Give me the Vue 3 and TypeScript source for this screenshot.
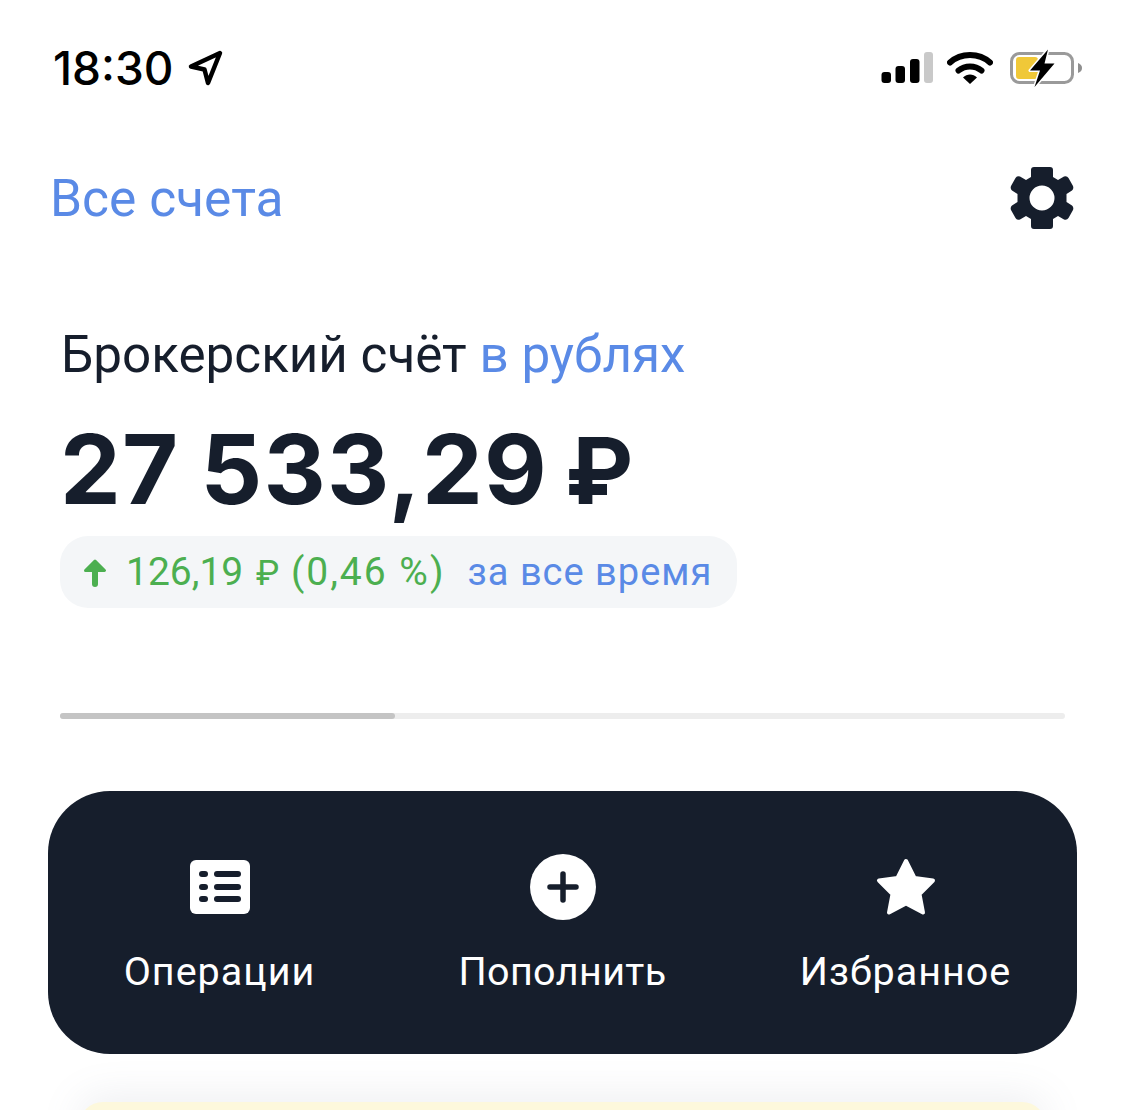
<template>
  <div class="screen">
    <div class="status">
      <div class="time">
        <span>18:30</span>
        <svg class="loc" width="36" height="36" viewBox="0 0 36 36">
          <path d="M32 3 3 16.500 16.500 19.500 20 33Z" fill="none" stroke="#000" stroke-width="4.500" stroke-linejoin="round" />
        </svg>
      </div>
      <div class="sys">
        <svg width="52" height="34" viewBox="0 0 52 34">
          <rect x="0.500" y="21" width="9.500" height="11" rx="3" fill="#000" />
          <rect x="14.500" y="15" width="9.500" height="17" rx="3" fill="#000" />
          <rect x="29" y="8" width="9.500" height="24" rx="3" fill="#000" />
          <rect x="43" y="1" width="9" height="31" rx="3" fill="#c9c9c9" />
        </svg>
        <svg width="46" height="34" viewBox="0 0 46 34">
          <path d="M3 11.500C14 1.500 32 1.500 43 11.500" fill="none" stroke="#000" stroke-width="6" stroke-linecap="round" />
          <path d="M11.500 19.500C18 14 28 14 34.500 19.500" fill="none" stroke="#000" stroke-width="6" stroke-linecap="round" />
          <path d="M16 26.500 23 33 30 26.500C26 22.500 20 22.500 16 26.500Z" fill="#000" />
        </svg>
        <svg width="76" height="40" viewBox="0 0 76 40">
          <rect x="4.500" y="5.500" width="61" height="29" rx="8" fill="none" stroke="#9a9a9a" stroke-width="3" />
          <rect x="9" y="9" width="22" height="22" rx="3" fill="#f0c838" />
          <path d="M71 15C74 16 75 18 75 20S74 24 71 25Z" fill="#8f8f8f" />
          <path d="M41 1.500 23 22.500H33L27.500 39 47.500 15.500H37.500Z" fill="#000" stroke="#fff" stroke-width="3" stroke-linejoin="round" paint-order="stroke" />
        </svg>
      </div>
    </div>

    <div class="head">
      <span class="all">Все счета</span>
      <svg width="64" height="66" viewBox="0 0 64 66">
        <path fill="#161e2c" fill-rule="evenodd" d="M24 2H40Q43 2 43 5V12L48 15 54 11.500Q57 10.500 58.500 13L63 21Q64 24 62 25.500L56.500 29V37L62 40.500Q64 42 63 45L58.500 53Q57 55.500 54 54.500L48 51 43 54V61Q43 64 40 64H24Q21 64 21 61V54L16 51 10 54.500Q7 55.500 5.500 53L1 45Q0 42 2 40.500L7.500 37V29L2 25.500Q0 24 1 21L5.500 13Q7 10.500 10 11.500L16 15 21 12V5Q21 2 24 2ZM32 20.500A12.500 12.500 0 1 0 32 45.500 12.500 12.500 0 1 0 32 20.500Z" />
      </svg>
    </div>

    <section class="acc">
      <div class="acc-name">Брокерский счёт <span class="blue">в рублях</span></div>
      <div class="total">27 533,29 <span class="rub">₽</span></div>
      <div class="pill">
        <svg class="arr" width="26" height="30" viewBox="0 0 26 30">
          <path d="M13 27V10" fill="none" stroke="#4caf50" stroke-width="6" stroke-linecap="round" />
          <path d="M13 4 22.500 13.500H3.500Z" fill="#4caf50" stroke="#4caf50" stroke-width="3" stroke-linejoin="round" />
        </svg>
        <span class="gain">126,19 <span class="rub">₽</span> <span class="pct">(0,46 %)</span></span>
        <span class="period">за все время</span>
      </div>
    </section>

    <div class="bar"><div class="bar-fill" :style="{ width: progress + '%' }"></div></div>

    <div class="actions">
      <div class="action">
        <svg width="60" height="54" viewBox="0 0 60 54">
          <rect width="60" height="54" rx="6" fill="#fff" />
          <rect x="9" y="11" width="9" height="6" rx="3" fill="#161e2c" />
          <rect x="9" y="24" width="9" height="6" rx="3" fill="#161e2c" />
          <rect x="9" y="36" width="9" height="6" rx="3" fill="#161e2c" />
          <rect x="24" y="11" width="27" height="6" rx="3" fill="#161e2c" />
          <rect x="24" y="24" width="27" height="6" rx="3" fill="#161e2c" />
          <rect x="24" y="36" width="27" height="6" rx="3" fill="#161e2c" />
        </svg>
        <span>Операции</span>
      </div>
      <div class="action">
        <svg width="66" height="66" viewBox="0 0 66 66">
          <circle cx="33" cy="33" r="33" fill="#fff" />
          <path d="M33 20V46M20 33H46" stroke="#161e2c" stroke-width="5.500" stroke-linecap="round" />
        </svg>
        <span>Пополнить</span>
      </div>
      <div class="action">
        <svg width="60" height="58" viewBox="0 0 60 58">
          <path d="M30 3 38.500 20 57 22.500 43.500 36 47 54.500 30 45.500 13 54.500 16.500 36 3 22.500 21.500 20Z" fill="#fff" stroke="#fff" stroke-width="4" stroke-linejoin="round" />
        </svg>
        <span>Избранное</span>
      </div>
    </div>

    <div class="next"></div>
  </div>
</template>

<script setup lang="ts">
const progress = 33.3;
</script>

<style>
html, body {
  margin: 0;
  background: #fff;
}
</style>

<style scoped>
.screen {
  width: 1125px;
  height: 1110px;
  overflow: hidden;
  background: #fff;
  font-family: Inter, "Liberation Sans", sans-serif;
  color: #161e2c;
  box-sizing: border-box;
}
.status {
  display: flex;
  justify-content: space-between;
  align-items: center;
  height: 136px;
  padding: 0 42px 0 53px;
  box-sizing: border-box;
}
.time {
  display: flex;
  align-items: center;
  gap: 14px;
  font-size: 46px;
  font-weight: 500;
  color: #000;
}
.sys {
  display: flex;
  align-items: center;
  gap: 14px;
}
.head {
  display: flex;
  justify-content: space-between;
  align-items: center;
  height: 66px;
  margin-top: 29px;
  padding: 0 51px 0 50px;
}
.all {
  font-family: Roboto, sans-serif;
  font-size: 51.500px;
  color: #5a8ae6;
}
.acc {
  padding: 96px 0 0 60px;
}
.acc-name {
  font-family: Roboto, sans-serif;
  font-size: 51.200px;
  line-height: 56px;
  padding-left: 1px;
}
.blue {
  color: #5a8ae6;
}
.total {
  font-size: 96.600px;
  font-weight: 700;
  line-height: 110px;
  margin-top: 31px;
  letter-spacing: 1.200px;
  word-spacing: -3px;
}
.total .rub {
  font-size: 92px;
  line-height: 1;
  letter-spacing: 0;
  margin-left: -4px;
}
.pill {
  display: inline-flex;
  align-items: center;
  height: 72px;
  padding: 0 25px 0 22px;
  margin-top: 12px;
  border-radius: 28px;
  background: #f4f6f8;
  font-family: Roboto, sans-serif;
  font-size: 38px;
  box-sizing: border-box;
}
.arr {
  margin-right: 18px;
}
.gain {
  color: #4caf50;
  font-size: 39px;
  word-spacing: 3px;
}
.gain .rub {
  font-size: 35px;
  letter-spacing: -1px;
}
.pct {
  letter-spacing: 2px;
  word-spacing: 0;
}
.period {
  color: #5a8ae6;
  margin-left: 22px;
  letter-spacing: 1px;
}
.bar {
  height: 6px;
  margin: 105px 60px 0;
  border-radius: 3px;
  background: #ededed;
}
.bar-fill {
  height: 100%;
  border-radius: 3px;
  background: #c4c4c4;
}
.actions {
  display: grid;
  grid-template-columns: repeat(3, 1fr);
  height: 263px;
  margin: 72px 48px 0;
  border-radius: 62px;
  background: #161e2c;
  color: #fff;
}
.action {
  display: flex;
  flex-direction: column;
  align-items: center;
  padding-top: 63px;
  font-family: Roboto, sans-serif;
  font-size: 39.500px;
  letter-spacing: 1px;
}
.action:nth-child(2) {
  letter-spacing: 0.400px;
}
.action svg {
  height: 66px;
  margin-bottom: 28px;
}
.next {
  height: 40px;
  margin: 48px 79px 0;
  border-radius: 24px 24px 0 0;
  background: #fdf8dc;
  box-shadow: 0 -4px 40px rgba(120, 130, 150, 0.14);
}
</style>
